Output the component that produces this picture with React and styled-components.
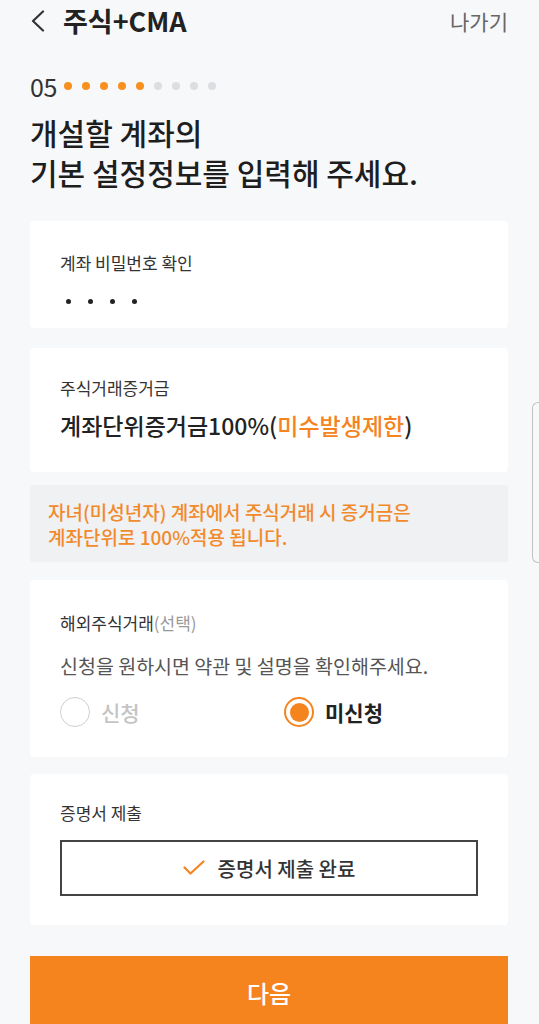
import React from "react";
import styled, { createGlobalStyle } from "styled-components";

const GlobalStyle = createGlobalStyle`
  * { box-sizing: border-box; }
  body {
    margin: 0;
    background: #f7f8fa;
    font-family: "Noto Sans CJK KR", "Noto Sans", sans-serif;
    color: #222;
  }
`;

const ORANGE = "#f5841f";

const Page = styled.div`
  position: relative;
  min-height: 1024px;
  overflow: hidden;
  padding: 0 31px 0 30px;
  background: #f7f8fa;
`;

const Header = styled.header`
  height: 42px;
  display: flex;
  align-items: center;
  justify-content: space-between;
`;

const TitleWrap = styled.div`
  display: flex;
  align-items: center;
  gap: 17px;
`;

const Title = styled.h1`
  margin: 0;
  font-size: 27px;
  font-weight: 700;
  line-height: 42px;
  color: #222;
`;

const Exit = styled.span`
  font-size: 21px;
  color: #666;
`;

const Progress = styled.div`
  margin-top: 30px;
  height: 28px;
  display: flex;
  align-items: center;
`;

const Step = styled.span`
  font-size: 25px;
  line-height: 28px;
  color: #333;
  margin-right: 2px;
  letter-spacing: -0.5px;
`;

const Dot = styled.span`
  width: 8px;
  height: 8px;
  border-radius: 50%;
  margin: 0 5px;
  background: ${(p) => (p.$on ? "#f7901e" : "#dcdee2")};
`;

const Heading = styled.h2`
  margin: 12px 0 0;
  font-size: 30px;
  font-weight: 500;
  line-height: 40px;
  color: #1e1e1e;
`;

const Card = styled.section`
  background: #fff;
  border-radius: 4px;
  padding: ${(p) => p.$pad || "30px 30px"};
  margin-top: ${(p) => p.$mt || "0"}px;
`;

const Label = styled.div`
  font-size: 17px;
  line-height: 24px;
  color: #333;
`;

const Muted = styled.span`
  color: #9a9a9a;
`;

const Secret = styled.div`
  margin-top: 14px;
  height: 24px;
  display: flex;
  align-items: center;
  gap: 17px;
  padding-left: 6px;
`;

const SecretDot = styled.span`
  width: 5px;
  height: 5px;
  border-radius: 50%;
  background: #222;
`;

const Value = styled.div`
  margin-top: 10px;
  font-size: 23px;
  font-weight: 500;
  line-height: 30px;
  color: #222;
`;

const Accent = styled.span`
  color: ${ORANGE};
`;

const Notice = styled.div`
  margin-top: 13px;
  background: #f0f1f3;
  border-radius: 2px;
  padding: 14px 18px 13px;
  font-size: 19px;
  font-weight: 500;
  line-height: 25px;
  color: #f28a2c;
`;

const Desc = styled.div`
  margin-top: 19px;
  font-size: 19.5px;
  line-height: 24px;
  color: #555;
`;

const RadioRow = styled.div`
  margin-top: 19px;
  display: grid;
  grid-template-columns: 224px 1fr;
  height: 30px;
`;

const RadioItem = styled.label`
  display: flex;
  align-items: center;
  gap: 11px;
  font-size: 21px;
  font-weight: ${(p) => (p.$checked ? 700 : 500)};
  color: ${(p) => (p.$checked ? "#222" : "#c4c4c4")};
`;

const Circle = styled.span`
  width: 30px;
  height: 30px;
  border-radius: 50%;
  border: ${(p) => (p.$checked ? `2px solid ${ORANGE}` : "1.5px solid #cfcfcf")};
  display: flex;
  align-items: center;
  justify-content: center;
  &::after {
    content: "";
    display: ${(p) => (p.$checked ? "block" : "none")};
    width: 19px;
    height: 19px;
    border-radius: 50%;
    background: ${ORANGE};
  }
`;

const Submitted = styled.div`
  margin-top: 15px;
  height: 56px;
  border: 2px solid #444;
  display: flex;
  align-items: center;
  justify-content: center;
  gap: 13px;
  font-size: 20px;
  font-weight: 500;
  color: #333;
`;

const NextButton = styled.button`
  display: block;
  width: 100%;
  margin-top: 31px;
  height: 72px;
  border: none;
  border-radius: 0;
  background: ${ORANGE};
  color: #fff;
  font-family: inherit;
  font-size: 24px;
  font-weight: 500;
`;

const ScrollHandle = styled.div`
  position: absolute;
  right: 0;
  top: 402px;
  width: 7px;
  height: 161px;
  border: 1.5px solid #c2c2c2;
  border-right: none;
  border-radius: 6px 0 0 6px;
  background: #f7f8fa;
`;

const Radio = ({ checked, children }) => (
  <RadioItem $checked={checked}>
    <Circle $checked={checked} />
    {children}
  </RadioItem>
);

export default function App() {
  return (
    <>
      <GlobalStyle />
      <Page>
        <Header>
          <TitleWrap>
            <svg width="16" height="22" viewBox="0 0 16 22">
              <polyline
                points="13,1.5 3,11 13,20.5"
                fill="none"
                stroke="#333"
                strokeWidth="2.2"
                strokeLinecap="round"
                strokeLinejoin="round"
              />
            </svg>
            <Title>주식+CMA</Title>
          </TitleWrap>
          <Exit>나가기</Exit>
        </Header>

        <Progress>
          <Step>05</Step>
          {Array.from({ length: 9 }).map((_, i) => (
            <Dot key={i} $on={i < 5} />
          ))}
        </Progress>

        <Heading>
          개설할 계좌의
          <br />
          기본 설정정보를 입력해 주세요.
        </Heading>

        <Card $mt={29} $pad="30px 30px 15px">
          <Label>계좌 비밀번호 확인</Label>
          <Secret>
            <SecretDot />
            <SecretDot />
            <SecretDot />
            <SecretDot />
          </Secret>
        </Card>

        <Card $mt={20} $pad="28px 30px 32px">
          <Label>주식거래증거금</Label>
          <Value>
            계좌단위증거금100%(<Accent>미수발생제한</Accent>)
          </Value>
        </Card>

        <Notice>
          자녀(미성년자) 계좌에서 주식거래 시 증거금은
          <br />
          계좌단위로 100%적용 됩니다.
        </Notice>

        <Card $mt={18} $pad="31px 30px 30px">
          <Label>
            해외주식거래<Muted>(선택)</Muted>
          </Label>
          <Desc>신청을 원하시면 약관 및 설명을 확인해주세요.</Desc>
          <RadioRow>
            <Radio>신청</Radio>
            <Radio checked>미신청</Radio>
          </RadioRow>
        </Card>

        <Card $mt={17} $pad="27px 30px 29px">
          <Label>증명서 제출</Label>
          <Submitted>
            <svg width="22" height="16" viewBox="0 0 22 16">
              <polyline
                points="1.5,7.5 7.5,13.5 20.5,1.5"
                fill="none"
                stroke={ORANGE}
                strokeWidth="2.2"
                strokeLinecap="round"
                strokeLinejoin="round"
              />
            </svg>
            증명서 제출 완료
          </Submitted>
        </Card>

        <NextButton>다음</NextButton>
        <ScrollHandle />
      </Page>
    </>
  );
}
